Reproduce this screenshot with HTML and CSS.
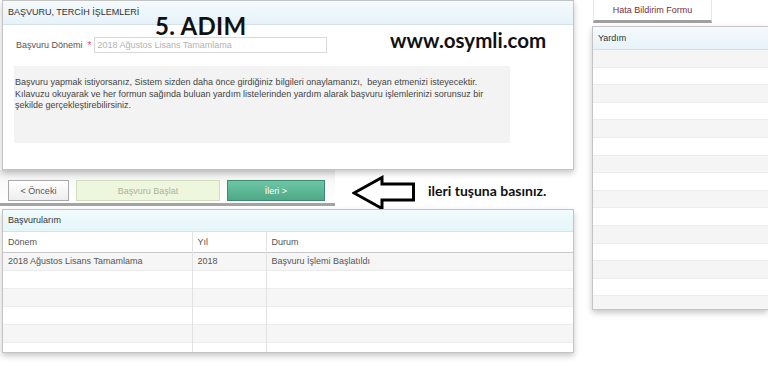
FILE: index.html
```html
<!DOCTYPE html>
<html lang="tr">
<head>
<meta charset="utf-8">
<title>Başvuru, Tercih İşlemleri</title>
<link rel="stylesheet" href="styles.css">
</head>
<body>
<div class="page">
  <div class="left">
    <section class="panel main">
      <div class="phead">BAŞVURU, TERCİH İŞLEMLERİ</div>
      <div class="form-row">
        <span class="label">Başvuru Dönemi</span>
        <span class="req">*</span>
        <div class="input">2018 Ağustos Lisans Tamamlama</div>
      </div>
      <div class="info">Başvuru yapmak istiyorsanız, Sistem sizden daha önce girdiğiniz bilgileri onaylamanızı,&nbsp; beyan etmenizi isteyecektir.<br>Kılavuzu okuyarak ve her formun sağında buluan yardım listelerinden yardım alarak başvuru işlemlerinizi sorunsuz bir<br>şekilde gerçekleştirebilirsiniz.</div>
      <div class="note step">5. ADIM</div>
      <div class="note site">www.osymli.com</div>
    </section>

    <div class="actions">
      <div class="toolbar">
        <button class="btn prev">&lt; Önceki</button>
        <button class="btn start">Başvuru Başlat</button>
        <button class="btn next">İleri &gt;</button>
      </div>
      <svg class="arrow" width="64" height="37" viewBox="0 0 64 37">
        <path d="M2 18 L30 2.5 L30 9 L61.5 9 L61.5 25 L30 25 L30 33.5 Z" fill="#fff" stroke="#000" stroke-width="3" stroke-linejoin="miter"/>
      </svg>
      <span class="hint">ileri tuşuna basınız.</span>
    </div>

    <section class="panel list">
      <div class="phead cyan">Başvurularım</div>
      <table class="grid">
        <thead>
          <tr><th class="c1">Dönem</th><th class="c2">Yıl</th><th>Durum</th></tr>
        </thead>
        <tbody>
          <tr><td>2018 Ağustos Lisans Tamamlama</td><td>2018</td><td>Başvuru İşlemi Başlatıldı</td></tr>
          <tr><td></td><td></td><td></td></tr>
          <tr><td></td><td></td><td></td></tr>
          <tr><td></td><td></td><td></td></tr>
          <tr><td></td><td></td><td></td></tr>
          <tr><td></td><td></td><td></td></tr>
        </tbody>
      </table>
    </section>
  </div>

  <div class="right">
    <div class="tab">Hata Bildirim Formu</div>
    <section class="panel help">
      <div class="phead">Yardım</div>
      <div class="rows">
        <div class="row"></div><div class="row"></div><div class="row"></div><div class="row"></div>
        <div class="row"></div><div class="row"></div><div class="row"></div><div class="row"></div>
        <div class="row"></div><div class="row"></div><div class="row"></div><div class="row"></div>
        <div class="row"></div><div class="row"></div><div class="row"></div><div class="row"></div>
      </div>
    </section>
  </div>
</div>
</body>
</html>
```

FILE: styles.css
```css
* { box-sizing: border-box; }

html, body {
  margin: 0;
  background: #fff;
}

body {
  font-family: "Liberation Sans", Arial, sans-serif;
  font-size: 9px;
  color: #444;
  overflow: hidden;
}

.page {
  display: grid;
  grid-template-columns: 572px 1fr;
  column-gap: 18px;
  padding-left: 2px;
  height: 385px;
  overflow: hidden;
}

.panel {
  position: relative;
  background: #fff;
  border: 1px solid #c4c4c4;
  box-shadow: 0 3px 6px rgba(0, 0, 0, 0.22);
}

.phead {
  height: 24px;
  line-height: 23px;
  padding-left: 5px;
  background: linear-gradient(#f5fafd, #e6f2f9);
  border-bottom: 1px solid #d3e1ea;
  color: #333;
}

.phead.cyan {
  height: 22px;
  line-height: 21px;
  background: linear-gradient(#f1fbfd, #e4f5f9);
}

/* main panel */
.main {
  height: 170px;
  z-index: 1;
}

.form-row {
  display: flex;
  align-items: center;
  height: 16px;
  margin: 12px 0 0 13px;
}

.label { color: #555; }

.req {
  color: #d9534f;
  font-size: 10px;
  margin: 0 3px 0 5px;
}

.input {
  width: 233px;
  height: 16px;
  line-height: 14px;
  padding-left: 2px;
  border: 1px solid #d9d9d9;
  color: #b3b3b3;
  background: #fff;
}

.info {
  width: 496px;
  height: 77px;
  margin: 13px 0 0 11px;
  padding: 11px 0 0 1px;
  line-height: 11.5px;
  background: #f3f3f3;
  color: #444;
}

.note {
  position: absolute;
  font-family: Lato, "Open Sans", sans-serif;
  font-weight: 700;
  color: #111;
  white-space: nowrap;
}

.step {
  left: 152px;
  top: 10px;
  font-size: 24px;
  letter-spacing: 0.3px;
}

.site {
  left: 387px;
  top: 27px;
  font-size: 20.5px;
}

/* actions row */
.actions {
  display: flex;
  align-items: flex-start;
  height: 39px;
  margin-left: -2px;
}

.toolbar {
  display: flex;
  gap: 7px;
  width: 335px;
  height: 36px;
  padding: 10px 0 0 8px;
  background: linear-gradient(#ececec, #fafafa 40%, #fff);
  border-bottom: 3px solid #a3a3a3;
}

.btn {
  height: 21px;
  margin: 0;
  padding: 0;
  font-family: "Liberation Sans", Arial, sans-serif;
  font-size: 9px;
  border-radius: 0;
}

.prev {
  width: 61px;
  border: 1px solid #a9a9a9;
  background: linear-gradient(#fff, #eeeeee);
  color: #555;
}

.start {
  width: 144px;
  border: 1px solid #d2dcbf;
  background: #eff6de;
  color: #aab39c;
}

.next {
  width: 98px;
  border: 1px solid #3d8a6f;
  background: linear-gradient(#6dc6a6, #4fa887);
  color: #fff;
}

.arrow {
  display: block;
  margin: 5px 0 0 17px;
  flex: none;
}

.hint {
  margin: 12px 0 0 12px;
  font-family: Lato, "Open Sans", sans-serif;
  font-weight: 700;
  font-size: 14px;
  color: #111;
  white-space: nowrap;
}

/* list panel */
.list {
  height: 144px;
  overflow: hidden;
}

.grid {
  width: 100%;
  border-collapse: collapse;
  table-layout: fixed;
}

.grid th, .grid td {
  padding: 0 0 0 5px;
  text-align: left;
  font-weight: 400;
  color: #555;
  border-right: 1px solid #e2e2e2;
  white-space: nowrap;
}

.grid th:last-child, .grid td:last-child { border-right: none; }

.grid .c1 { width: 189px; }
.grid .c2 { width: 74px; }

.grid thead tr {
  height: 20px;
  background: #fff;
  border-bottom: 1px solid #c9c9c9;
}

.grid tbody tr {
  height: 18px;
  border-bottom: 1px solid #ececec;
}

.grid tbody tr:nth-child(odd) { background: #f6f6f6; }
.grid tbody tr:nth-child(even) { background: #fff; }

/* right column */
.right {
  display: flex;
  flex-direction: column;
}

.tab {
  width: 119px;
  height: 23px;
  margin-left: 1px;
  line-height: 21px;
  text-align: center;
  color: #7b2e3c;
  background: #fff;
  border-left: 1px solid #e6e6e6;
  border-right: 1px solid #e6e6e6;
  border-bottom: 3px solid #a0a0a0;
}

.help {
  margin-top: 3px;
  height: 284px;
  border-right: none;
  overflow: hidden;
}

.help .phead {
  height: 23px;
  line-height: 22px;
}

.rows .row {
  height: 17.6px;
  border-bottom: 1px solid #ececec;
}

.rows .row:nth-child(odd) { background: #f5f5f5; }
.rows .row:nth-child(even) { background: #fff; }
```
